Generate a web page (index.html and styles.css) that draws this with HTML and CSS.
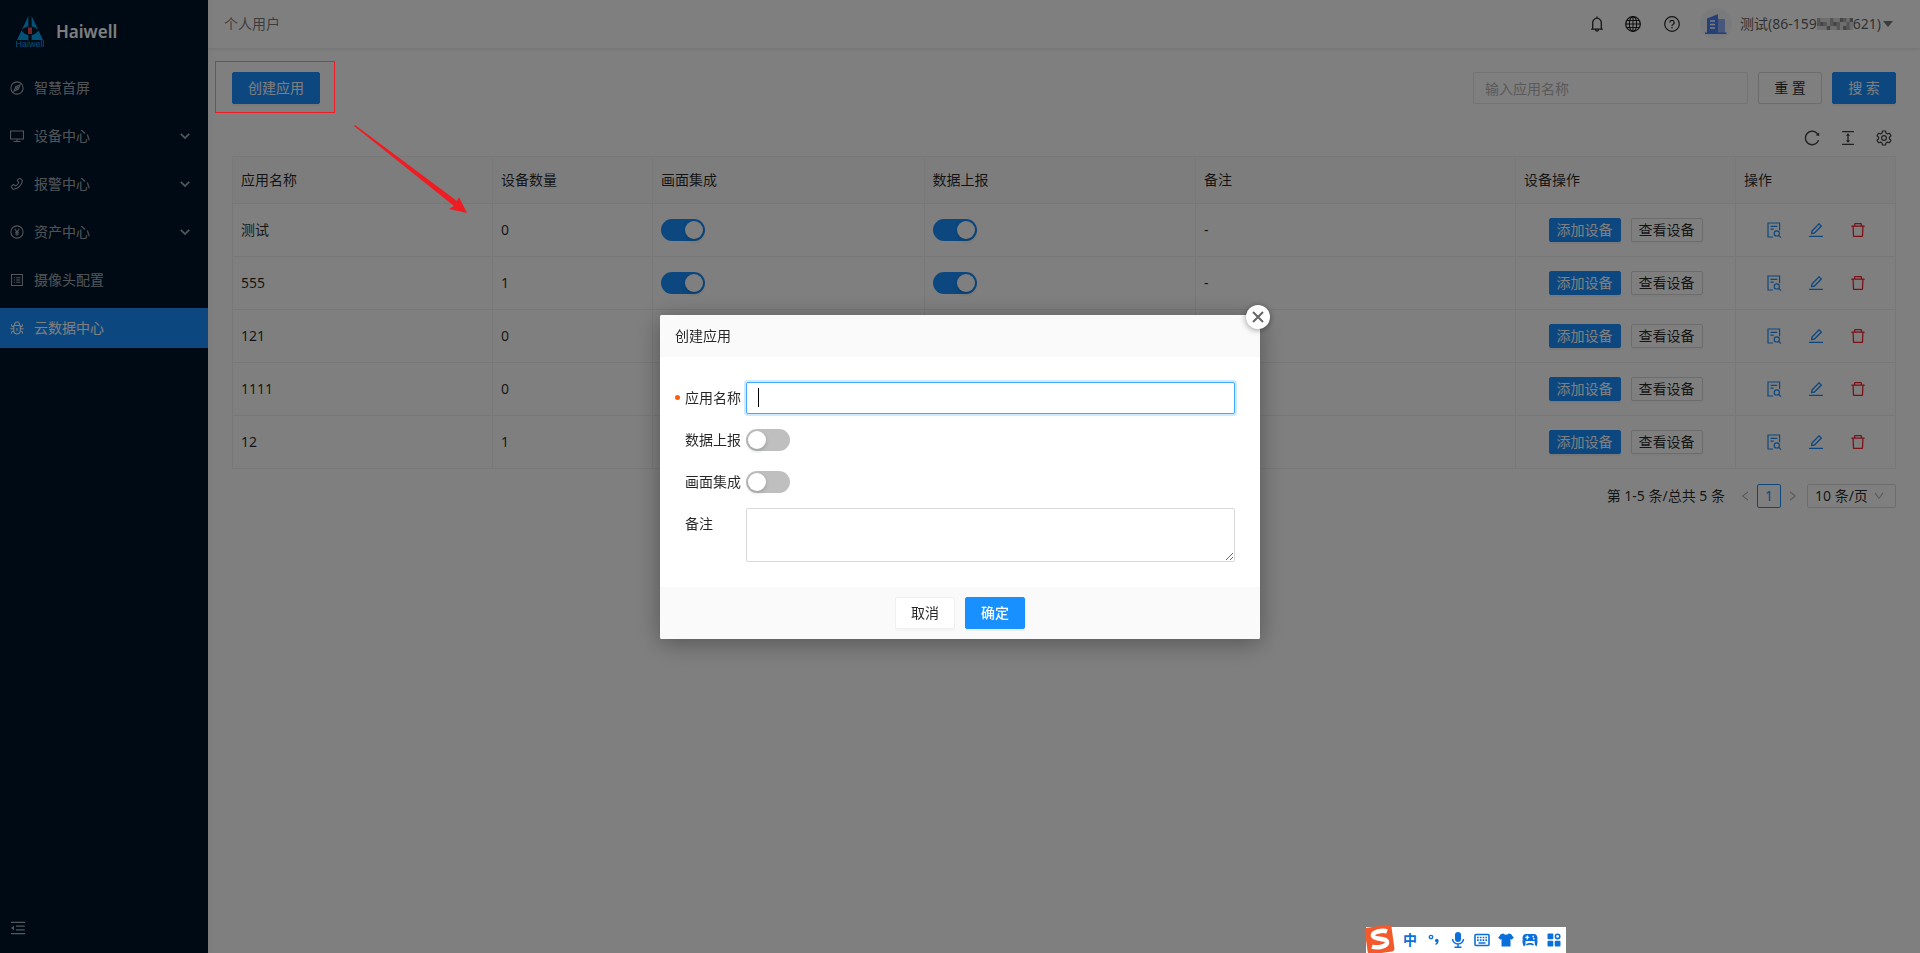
FILE: index.html
```html
<!DOCTYPE html>
<html lang="zh-CN">
<head>
<meta charset="utf-8">
<title>Haiwell</title>
<link rel="stylesheet" href="styles.css">
</head>
<body>
<svg class="sprite" aria-hidden="true">
  <symbol id="compass" viewBox="0 0 16 16"><g fill="none" stroke="currentColor" stroke-width="1.2"><circle cx="8" cy="8" r="7"/><path d="M11.4 4.6L9.4 9.4 4.6 11.4 6.6 6.6z"/><path d="M6.8 9.2l2.4-2.4" stroke-width="1.6"/></g></symbol>
  <symbol id="desktop" viewBox="0 0 16 16"><path d="M.6 2.2h14.8v9.2H.6zM8 11.4V14M4 14.2h8" fill="none" stroke="currentColor" stroke-width="1.2"/></symbol>
  <symbol id="phone" viewBox="0 0 16 16"><path d="M10.6 1.6l-2.1 2.1a.6.6 0 0 0 0 .8l1.6 1.9c-.8 1.8-2 3-3.8 3.8L4.500 8.600a.6.6 0 0 0-.8 0l-2.100 2.100a.6.6 0 0 0-.1.800l1.700 2.100c.3.400.7.500 1.200.400 5.100-1 8.800-4.700 9.700-9.500.1-.5-.1-.9-.400-1.200l-2.300-1.800a.6.6 0 0 0-.8.100z" fill="none" stroke="currentColor" stroke-width="1.200"/></symbol>
  <symbol id="pay" viewBox="0 0 16 16"><g fill="none" stroke="currentColor" stroke-width="1.2"><circle cx="8" cy="8" r="7"/><path d="M5.500 4.200L8 8l2.500-3.800M8 8v4.200M5.800 8.300h4.400M5.800 10.200h4.400"/></g></symbol>
  <symbol id="profile" viewBox="0 0 16 16"><path d="M1.800 1.800h12.400v12.400H1.800zM4.400 5.400h1.200M4.400 8h1.200M4.400 10.600h1.200M7 5.400h4.800M7 8h4.800M7 10.600h4.800" fill="none" stroke="currentColor" stroke-width="1.200"/></symbol>
  <symbol id="bug" viewBox="0 0 16 16"><path d="M4.300 5.200h7.400v5.600a3.700 3.900 0 0 1-7.400 0zM5.200 5.200V4a2.800 2.800 0 0 1 5.600 0v1.200M8 8v3.500M.4 8.800h3.900M11.700 8.800h3.900M1.800 3.600V5c0 .8.600 1.400 1.400 1.400h1.100M14.200 3.600V5c0 .8-.6 1.400-1.400 1.400h-1.100M1.800 14.600v-1.400c0-.8.600-1.400 1.400-1.400h1.300M14.200 14.600v-1.400c0-.8-.6-1.400-1.400-1.400h-1.300" fill="none" stroke="currentColor" stroke-width="1.200"/></symbol>
  <symbol id="chevron" viewBox="0 0 10 10"><path d="M.8 2.800L5 7l4.200-4.200" fill="none" stroke="currentColor" stroke-width="1.700"/></symbol>
  <symbol id="down" viewBox="0 0 1024 1024"><path d="M884 256h-75c-5.100 0-9.900 2.500-12.900 6.600L512 654.200 227.900 262.600c-3-4.100-7.800-6.600-12.900-6.600h-75c-6.500 0-10.300 7.400-6.500 12.700l352.600 486.100c12.800 17.600 39 17.600 51.700 0l352.600-486.100c3.900-5.300.1-12.700-6.400-12.700z"/></symbol>
  <symbol id="fold" viewBox="0 0 1024 1024"><path d="M408 442h480c4.400 0 8-3.600 8-8v-56c0-4.400-3.600-8-8-8H408c-4.400 0-8 3.600-8 8v56c0 4.400 3.600 8 8 8zm-8 204c0 4.400 3.600 8 8 8h480c4.400 0 8-3.600 8-8v-56c0-4.400-3.600-8-8-8H408c-4.400 0-8 3.600-8 8v56zm504-486H120c-4.400 0-8 3.600-8 8v56c0 4.400 3.600 8 8 8h784c4.400 0 8-3.600 8-8v-56c0-4.400-3.600-8-8-8zm0 632H120c-4.400 0-8 3.600-8 8v56c0 4.400 3.600 8 8 8h784c4.400 0 8-3.600 8-8v-56c0-4.400-3.600-8-8-8zM115.400 518.900L271.700 642c5.800 4.600 14.400.5 14.400-6.900V388.900c0-7.400-8.500-11.500-14.400-6.900L115.400 505.100a8.740 8.740 0 000 13.800z"/></symbol>
  <symbol id="bell" viewBox="0 0 1024 1024"><path d="M816 768h-24V428c0-141.100-104.300-257.800-240-277.200V112c0-22.100-17.900-40-40-40s-40 17.900-40 40v38.800C336.300 170.200 232 286.900 232 428v340h-24c-17.700 0-32 14.300-32 32v32c0 4.400 3.600 8 8 8h216c0 61.800 50.200 112 112 112s112-50.200 112-112h216c4.400 0 8-3.600 8-8v-32c0-17.700-14.300-32-32-32zM512 888c-26.500 0-48-21.500-48-48h96c0 26.500-21.500 48-48 48zM304 768V428c0-55.600 21.600-107.800 60.900-147.100S456.400 220 512 220c55.600 0 107.800 21.600 147.100 60.900S720 372.400 720 428v340H304z"/></symbol>
  <symbol id="globe" viewBox="0 0 16 16"><g fill="none" stroke="currentColor" stroke-width="1.1"><circle cx="8" cy="8" r="7.300" stroke-width="1.300"/><ellipse cx="8" cy="8" rx="3.700" ry="7.300"/><path d="M8 .7v14.600M.7 8h14.600M1.800 4.500h12.400M1.800 11.500h12.400"/></g></symbol>
  <symbol id="help" viewBox="0 0 16 16"><g fill="none" stroke="currentColor" stroke-width="1.200"><circle cx="8" cy="8" r="7.300"/><path d="M5.800 6.500a2.200 2.200 0 1 1 3.200 2c-.7.300-1 .7-1 1.300v.3"/></g><circle cx="8" cy="11.700" r=".8"/></symbol>
  <symbol id="reload" viewBox="0 0 1024 1024"><path d="M909.100 209.300l-56.400 44.100C775.800 155.100 656.200 92 521.900 92 290 92 102.300 279.500 102 511.500 101.700 743.700 289.800 932 521.900 932c181.300 0 335.800-115 394.600-276.100 1.500-4.200-.7-8.900-4.900-10.300l-56.700-19.500a8 8 0 00-10.100 4.800c-1.800 5-3.800 10-5.900 14.900-17.300 41-42.100 77.800-73.700 109.400A344.770 344.770 0 01655.900 829c-42.300 17.900-87.400 27-133.800 27-46.500 0-91.500-9.100-133.800-27A341.500 341.500 0 01279 755.200a342.160 342.160 0 01-73.700-109.400c-17.900-42.400-27-87.400-27-133.900s9.100-91.500 27-133.900c17.300-41 42.100-77.800 73.700-109.400 31.600-31.600 68.400-56.400 109.300-73.800 42.300-17.900 87.400-27 133.800-27 46.500 0 91.500 9.100 133.800 27a341.500 341.500 0 01109.300 73.800c9.900 9.900 19.200 20.400 27.800 31.400l-60.200 47a8 8 0 003 14.100l175.600 43c5 1.200 9.900-2.600 9.900-7.700l.8-180.900c-.1-6.600-7.800-10.300-13-6.200z"/></symbol>
  <symbol id="density" viewBox="0 0 1024 1024"><path d="M840 836H184c-4.400 0-8 3.600-8 8v60c0 4.400 3.600 8 8 8h656c4.400 0 8-3.600 8-8v-60c0-4.400-3.600-8-8-8zm0-724H184c-4.400 0-8 3.600-8 8v60c0 4.400 3.600 8 8 8h656c4.400 0 8-3.600 8-8v-60c0-4.400-3.600-8-8-8zM610.800 378c6 0 9.400-7 5.700-11.700L515.700 238.700a7.140 7.140 0 00-11.300 0L403.600 366.300a7.230 7.230 0 005.700 11.700H476v268h-62.800c-6 0-9.400 7-5.700 11.700l100.800 127.500c2.900 3.700 8.500 3.700 11.300 0l100.800-127.500c3.700-4.700.4-11.700-5.700-11.700H548V378h62.800z"/></symbol>
  <symbol id="gear" viewBox="0 0 16 16"><g fill="none" stroke="currentColor" stroke-width="1.200" stroke-linejoin="round"><path d="M6.500 1h3l.5 2 1.500.9 2-.7 1.500 2.600L13.400 7.200v1.600l1.600 1.400-1.500 2.600-2-.7-1.500.9-.5 2h-3L6 13l-1.500-.9-2 .7L1 10.200l1.600-1.400V7.200L1 5.800l1.500-2.600 2 .7L6 3z"/><circle cx="8" cy="8" r="2.400"/></g></symbol>
  <symbol id="search-doc" viewBox="0 0 16 16"><g fill="none" stroke="currentColor" stroke-width="1.200"><path d="M7 15H2V1h11.600v7.200M4.500 4.400h6.800M4.500 7.200h3.200"/><circle cx="10.800" cy="11.400" r="2.600"/><path d="M12.700 13.300l2.300 2.300"/></g></symbol>
  <symbol id="edit" viewBox="0 0 1024 1024"><path d="M257.700 752c2 0 4-.2 6-.5L431.900 722c2-.4 3.900-1.300 5.300-2.800l423.900-423.900a9.960 9.960 0 000-14.100L694.900 114.900c-1.900-1.900-4.400-2.900-7.100-2.900s-5.200 1-7.100 2.900L256.800 538.800c-1.500 1.500-2.400 3.300-2.800 5.300l-29.500 168.200a33.500 33.500 0 009.400 29.800c6.600 6.400 14.900 9.900 23.800 9.900zm67.400-174.400L687.800 215l73.300 73.300-362.700 362.600-88.900 15.700 15.600-89zM880 836H144c-17.700 0-32 14.300-32 32v36c0 4.400 3.600 8 8 8h784c4.400 0 8-3.600 8-8v-36c0-17.700-14.300-32-32-32z"/></symbol>
  <symbol id="trash" viewBox="0 0 1024 1024"><path d="M360 184h-8c4.400 0 8-3.600 8-8v8h304v-8c0 4.400 3.600 8 8 8h-8v72h72v-80c0-35.300-28.700-64-64-64H352c-35.300 0-64 28.700-64 64v80h72v-72zm504 72H160c-17.700 0-32 14.300-32 32v32c0 4.400 3.600 8 8 8h60.400l24.700 523c1.600 34.100 29.800 61 63.900 61h454c34.200 0 62.300-26.800 63.900-61l24.700-523H888c4.400 0 8-3.600 8-8v-32c0-17.700-14.300-32-32-32zM731.300 840H292.700l-24.200-512h487l-24.200 512z"/></symbol>
</svg>

<div class="app">
  <aside class="sidebar">
    <a class="brand" href="#">
      <svg class="brand-logo" viewBox="0 0 28 32" aria-hidden="true">
        <path d="M12.400 0V10.500C9 11 7 12.500 5.500 14.500 7 16.800 9.500 18.500 12.400 19V24H1zM15.600 0V10.500C19 11 21 12.500 22.500 14.500 21 16.800 18.500 18.500 15.600 19V24H27z" fill="#0aa5f0"/>
        <path d="M12 11.500h4v6.500h-4z" fill="#e8484f"/>
        <text x="14" y="31" text-anchor="middle" class="logo-text">Haiwell</text>
      </svg>
      <span class="brand-name">Haiwell</span>
    </a>
    <nav class="menu">
      <a class="menu-item" href="#"><svg class="i14"><use href="#compass"/></svg><span>智慧首屏</span></a>
      <a class="menu-item" href="#"><svg class="i14"><use href="#desktop"/></svg><span>设备中心</span><svg class="i10 arrow"><use href="#chevron"/></svg></a>
      <a class="menu-item" href="#"><svg class="i14"><use href="#phone"/></svg><span>报警中心</span><svg class="i10 arrow"><use href="#chevron"/></svg></a>
      <a class="menu-item" href="#"><svg class="i14"><use href="#pay"/></svg><span>资产中心</span><svg class="i10 arrow"><use href="#chevron"/></svg></a>
      <a class="menu-item" href="#"><svg class="i14"><use href="#profile"/></svg><span>摄像头配置</span></a>
      <a class="menu-item active" href="#"><svg class="i14"><use href="#bug"/></svg><span>云数据中心</span></a>
    </nav>
    <button class="icon-btn collapse" aria-label="收起菜单"><svg class="i18"><use href="#fold"/></svg></button>
  </aside>

  <div class="main">
    <header class="header">
      <span class="muted">个人用户</span>
      <div class="header-right">
        <button class="icon-btn" aria-label="通知"><svg class="i18"><use href="#bell"/></svg></button>
        <button class="icon-btn globe" aria-label="语言"><svg class="i16"><use href="#globe"/></svg></button>
        <button class="icon-btn help" aria-label="帮助"><svg class="i16"><use href="#help"/></svg></button>
        <button class="user">
          <svg class="avatar" viewBox="0 0 32 32" aria-hidden="true"><circle cx="16" cy="16" r="16" fill="#f3f5f8"/><path d="M18 11h6.500q.5 0 .5.500V25h-7z" fill="#8fb0f5"/><path d="M7 10.500l10-4q1-.5 1 .5v18H7z" fill="#4a7ff2"/><path d="M5 24.500h21.500V26H5z" fill="#4a7ff2"/><path d="M10 13h5M10 16.500h5M10 20h5" stroke="#fff" stroke-width="1.300"/></svg>
          <span class="user-name"><span>测试(86-159</span><svg class="mosaic" viewBox="0 0 11 3" preserveAspectRatio="none" aria-hidden="true"><path fill="#ddd" d="M0 0h11v3H0z"/><path fill="#aaa" d="M0 0h1v2H0zM2 1h1v1H2zM4 0h1v2H4zM6 1h1v2H6zM8 0h1v1H8zM9 1h1v2H9z"/><path fill="#888" d="M1 1h1v1H1zM3 2h1v1H3zM5 1h1v1H5zM7 0h1v1H7zM8 2h1v1H8zM10 0h1v1h-1z"/></svg><span>621)</span></span>
          <i class="caret-down"></i>
        </button>
      </div>
    </header>

    <main class="content">
      <div class="filters">
        <span class="create-wrap"><button class="btn primary">创建应用</button></span>
        <form class="search">
          <input class="text-input query" type="text" placeholder="输入应用名称" aria-label="应用名称">
          <button class="btn" type="button">重 置</button>
          <button class="btn primary" type="button">搜 索</button>
        </form>
      </div>
      <div class="tools">
        <button class="icon-btn" aria-label="刷新"><svg class="i18"><use href="#reload"/></svg></button>
        <button class="icon-btn" aria-label="密度"><svg class="i18"><use href="#density"/></svg></button>
        <button class="icon-btn" aria-label="列设置"><svg class="i18 pad"><use href="#gear"/></svg></button>
      </div>
      <table class="table">
        <colgroup><col class="c-name"><col class="c-count"><col><col><col class="c-note"><col class="c-device"><col class="c-ops"></colgroup>
        <thead><tr><th>应用名称</th><th>设备数量</th><th>画面集成</th><th>数据上报</th><th>备注</th><th>设备操作</th><th>操作</th></tr></thead>
        <tbody>
          <tr><td>测试</td><td>0</td><td><input class="switch" type="checkbox" checked aria-label="画面集成"></td><td><input class="switch" type="checkbox" checked aria-label="数据上报"></td><td>-</td>
            <td><div class="cell"><button class="btn small primary">添加设备</button><button class="btn small">查看设备</button></div></td>
            <td><div class="cell ops"><button class="icon-btn" aria-label="查看"><svg class="i18 pad"><use href="#search-doc"/></svg></button><button class="icon-btn" aria-label="编辑"><svg class="i18"><use href="#edit"/></svg></button><button class="icon-btn danger" aria-label="删除"><svg class="i18"><use href="#trash"/></svg></button></div></td></tr>
          <tr><td>555</td><td>1</td><td><input class="switch" type="checkbox" checked aria-label="画面集成"></td><td><input class="switch" type="checkbox" checked aria-label="数据上报"></td><td>-</td>
            <td><div class="cell"><button class="btn small primary">添加设备</button><button class="btn small">查看设备</button></div></td>
            <td><div class="cell ops"><button class="icon-btn" aria-label="查看"><svg class="i18 pad"><use href="#search-doc"/></svg></button><button class="icon-btn" aria-label="编辑"><svg class="i18"><use href="#edit"/></svg></button><button class="icon-btn danger" aria-label="删除"><svg class="i18"><use href="#trash"/></svg></button></div></td></tr>
          <tr><td>121</td><td>0</td><td></td><td></td><td></td>
            <td><div class="cell"><button class="btn small primary">添加设备</button><button class="btn small">查看设备</button></div></td>
            <td><div class="cell ops"><button class="icon-btn" aria-label="查看"><svg class="i18 pad"><use href="#search-doc"/></svg></button><button class="icon-btn" aria-label="编辑"><svg class="i18"><use href="#edit"/></svg></button><button class="icon-btn danger" aria-label="删除"><svg class="i18"><use href="#trash"/></svg></button></div></td></tr>
          <tr><td>1111</td><td>0</td><td></td><td></td><td></td>
            <td><div class="cell"><button class="btn small primary">添加设备</button><button class="btn small">查看设备</button></div></td>
            <td><div class="cell ops"><button class="icon-btn" aria-label="查看"><svg class="i18 pad"><use href="#search-doc"/></svg></button><button class="icon-btn" aria-label="编辑"><svg class="i18"><use href="#edit"/></svg></button><button class="icon-btn danger" aria-label="删除"><svg class="i18"><use href="#trash"/></svg></button></div></td></tr>
          <tr><td>12</td><td>1</td><td></td><td></td><td></td>
            <td><div class="cell"><button class="btn small primary">添加设备</button><button class="btn small">查看设备</button></div></td>
            <td><div class="cell ops"><button class="icon-btn" aria-label="查看"><svg class="i18 pad"><use href="#search-doc"/></svg></button><button class="icon-btn" aria-label="编辑"><svg class="i18"><use href="#edit"/></svg></button><button class="icon-btn danger" aria-label="删除"><svg class="i18"><use href="#trash"/></svg></button></div></td></tr>
        </tbody>
      </table>
      <div class="pager">
        <span class="total">第 1-5 条/总共 5 条</span>
        <button class="icon-btn page-nav" aria-label="上一页"><svg class="i12 left"><use href="#down"/></svg></button>
        <button class="page current">1</button>
        <button class="icon-btn page-nav" aria-label="下一页"><svg class="i12 right"><use href="#down"/></svg></button>
        <span class="select-wrap"><select class="page-size" aria-label="每页条数"><option>10 条/页</option></select><svg class="i12 select-arrow"><use href="#down"/></svg></span>
      </div>
    </main>
  </div>
</div>

<div class="overlay">
  <form class="modal" role="dialog" aria-labelledby="modal-title">
    <button class="close" type="button" aria-label="关闭"><svg viewBox="0 0 12 12"><path d="M1 1l10 10M11 1L1 11" stroke="currentColor" stroke-width="2"/></svg></button>
    <h2 class="modal-head" id="modal-title">创建应用</h2>
    <div class="modal-body">
      <div class="field required"><label for="name">应用名称</label><span class="focus-wrap"><input class="text-input focused" id="name" type="text"></span></div>
      <div class="field"><label for="report">数据上报</label><input class="switch" id="report" type="checkbox"></div>
      <div class="field"><label for="screen">画面集成</label><input class="switch" id="screen" type="checkbox"></div>
      <div class="field"><label for="note">备注</label><textarea class="text-input note" id="note"></textarea></div>
    </div>
    <div class="modal-foot">
      <button class="btn light" type="button">取消</button>
      <button class="btn primary strong" type="button">确定</button>
    </div>
  </form>
</div>

<div class="callout-box"></div>
<svg class="callout-arrow" viewBox="0 0 116 92" aria-hidden="true"><path d="M1 0L103 76 105 72 113 88 95 84 100 81 0 1z" fill="#ee1c23"/></svg>

<div class="ime">
  <svg class="ime-logo" viewBox="0 0 32 32" aria-hidden="true"><g transform="rotate(-8 16 16)"><rect x="2" y="3" width="27" height="27" rx="3" fill="#f4592b"/><path d="M24 9.500C20 7.500 9 7.500 9.500 12c.5 4 13 3.500 13 8 0 5-11 4.500-15.500 2.500" fill="none" stroke="#fff" stroke-width="4.500"/></g></svg>
  <span class="ime-text">中</span>
  <svg class="i16" viewBox="0 0 16 16"><circle cx="5" cy="5" r="1.700" fill="none" stroke="currentColor" stroke-width="1.300"/><path d="M9 8.500a1.800 1.800 0 0 1 3.600 0c0 2.200-.9 3.800-2.800 4.500l-.5-1.200c.8-.4 1.200-.9 1.300-1.500A1.700 1.700 0 0 1 9 8.500z"/></svg>
  <svg class="i16" viewBox="0 0 16 16"><rect x="5" y="0" width="6" height="10" rx="3"/><path d="M2.500 7a5.500 5 0 0 0 11 0M8 12v3.200M4.500 15.200h7" fill="none" stroke="currentColor" stroke-width="1.500"/></svg>
  <svg class="i16" viewBox="0 0 16 16"><rect x="1" y="2.500" width="14" height="11" rx="1" fill="none" stroke="currentColor" stroke-width="1.600"/><path d="M3 5.500h10M3 8.200h10" stroke="currentColor" stroke-width="1.700" stroke-dasharray="1.700 1.100"/><path d="M4.500 11h7" stroke="currentColor" stroke-width="1.500"/></svg>
  <svg class="i16" viewBox="0 0 16 16"><path d="M5.500 1.500c1 1.600 4 1.600 5 0L13 2l2.800 3.800-2.300 2-1-1V14.500h-9V6.800l-1 1-2.300-2L3 2z"/></svg>
  <svg class="i16" viewBox="0 0 16 16"><path fill-rule="evenodd" d="M4 2h8c2.200 0 3.500 2 3.500 4.500 0 1.500-1 2.500-2.500 2.500H3C1.500 9 .5 8 .5 6.500.5 4 1.800 2 4 2zM4.600 3.500v1.300H3.300v1.300h1.300v1.300h1.300V6.100h1.300V4.800H5.900V3.500zM10.500 3.700v1.500H12V3.700zM11 6v1.500h1.500V6z"/><path d="M.5 8l3 .5L3.500 13l-1.500 1.500C.8 13 .3 10 .5 8zM15.500 8l-3 .5.5 4.500 1.500 1.500C15.200 13 15.700 10 15.500 8zM4 12.500C5 10.500 11 10.500 12 12.500l-1 1c-1-1-5-1-6 0z"/></svg>
  <svg class="i16" viewBox="0 0 16 16"><rect x="1.500" y="1.500" width="5.800" height="5.800" rx="1"/><rect x="1.500" y="8.700" width="5.800" height="5.800" rx="1"/><rect x="8.700" y="8.700" width="5.800" height="5.800" rx="1"/><circle cx="11.600" cy="4.400" r="2.200" fill="none" stroke="currentColor" stroke-width="1.600"/></svg>
</div>
</body>
</html>
```

FILE: styles.css
```css
*, *::before, *::after { box-sizing: border-box; }

body {
  margin: 0;
  font: 14px/22px "Noto Sans", "Noto Sans CJK SC", sans-serif;
  color: rgba(0, 0, 0, .85);
  background: #fff;
}

button, input, select, textarea { font: inherit; color: inherit; }
button { cursor: pointer; }
svg { fill: currentColor; flex: none; }
a { text-decoration: none; color: inherit; }
.sprite { display: none; }
.i10 { width: 10px; height: 10px; }
.i12 { width: 12px; height: 12px; }
.i14 { width: 14px; height: 14px; }
.i16 { width: 16px; height: 16px; }
.i18 { width: 18px; height: 18px; }
.pad { padding: 1px; }

.icon-btn { display: inline-flex; padding: 0; border: 0; background: none; }

.app { display: flex; min-height: 100vh; }

/* Sidebar */
.sidebar {
  display: flex;
  flex-direction: column;
  flex: none;
  width: 208px;
  color: rgba(255, 255, 255, .65);
  background: #001529;
  box-shadow: 2px 0 8px rgba(29, 35, 41, .05);
}
.brand { display: flex; align-items: center; gap: 12px; height: 64px; padding: 0 16px; }
.brand-logo { width: 28px; height: 32px; }
.logo-text { font: 9px "Liberation Sans", sans-serif; fill: #0aa5f0; }
.brand-name { font-size: 17px; font-weight: 600; color: #fff; }
.menu { display: flex; flex-direction: column; gap: 8px; padding-top: 4px; }
.menu-item { display: flex; align-items: center; gap: 10px; height: 40px; padding: 0 18px 0 10px; }
.menu-item.active { color: #fff; background: #1890ff; }
.arrow { margin-left: auto; }
.collapse { margin-top: auto; padding: 16px 9px; }

/* Header */
.main { flex: 1; min-width: 0; }
.header {
  display: flex;
  align-items: center;
  justify-content: space-between;
  height: 48px;
  padding: 0 27px 0 16px;
  box-shadow: 0 1px 4px rgba(0, 21, 41, .12);
}
.muted { color: rgba(0, 0, 0, .55); }
.header-right { display: flex; align-items: center; }
.globe { margin-left: 19px; }
.help { margin-left: 23px; }
.user { display: flex; align-items: center; margin-left: 20px; padding: 0; border: 0; background: none; color: rgba(0, 0, 0, .65); }
.avatar { width: 32px; height: 32px; margin-right: 8px; }
.user-name { display: flex; align-items: center; }
.mosaic { width: 36px; height: 12px; }
.caret-down { margin-left: 2px; border: 5px solid transparent; border-top: 6px solid #777; border-bottom: 0; }

/* Filters and tools */
.content { padding: 24px; }
.filters, .search, .tools, .pager { display: flex; align-items: center; }
.filters { justify-content: space-between; }
.search { gap: 10px; }
.btn {
  height: 32px;
  padding: 0 15px;
  border: 1px solid #d9d9d9;
  border-radius: 2px;
  background: #fff;
  box-shadow: 0 2px 0 rgba(0, 0, 0, .02);
  white-space: nowrap;
}
.search .btn { width: 64px; }
.btn.primary { color: #fff; border-color: #1890ff; background: #1890ff; box-shadow: 0 2px 0 rgba(0, 0, 0, .05); }
.btn.small { height: 24px; padding: 0 7px; line-height: 20px; }
.btn.light { border-color: #f0f0f0; }
.btn.strong { font-weight: 500; }
.text-input {
  width: 100%;
  height: 32px;
  padding: 4px 11px;
  border: 1px solid #d9d9d9;
  border-radius: 2px;
  outline: 0;
  background: #fff;
}
.text-input::placeholder { color: #b4b4b4; }
.query { width: 275px; border-color: #e8e8e8; }
.tools { justify-content: flex-end; gap: 18px; height: 52px; padding: 16px 3px 0 0; color: rgba(0, 0, 0, .75); }

/* Table */
.table { width: 100%; table-layout: fixed; border-collapse: collapse; }
.table th, .table td { height: 53px; padding: 0 8px; border: 1px solid #f0f0f0; text-align: left; font-weight: 400; }
.table th { height: 47px; background: #fafafa; }
.c-name { width: 260px; }
.c-count, .c-ops { width: 160px; }
.c-note { width: 320px; }
.c-device { width: 220px; }
.cell { display: flex; align-items: center; justify-content: center; gap: 10px; }
.ops { gap: 24px; color: #1890ff; }
.danger { color: #f5222d; }

.switch {
  display: block;
  appearance: none;
  position: relative;
  flex: none;
  width: 44px;
  height: 22px;
  margin: 0;
  border-radius: 11px;
  background: #bfbfbf;
}
.switch::before {
  content: "";
  position: absolute;
  top: 2px;
  left: 2px;
  width: 18px;
  height: 18px;
  border-radius: 9px;
  background: #fff;
  box-shadow: 0 2px 4px rgba(0, 35, 11, .2);
}
.switch:checked { background: #1890ff; }
.switch:checked::before { left: 24px; }

/* Pagination */
.pager { justify-content: flex-end; padding-top: 15px; }
.total { margin-right: 14px; }
.page-nav { width: 12px; color: #a6a6a6; }
.left { transform: rotate(90deg); }
.right { transform: rotate(-90deg); }
.page { width: 24px; height: 24px; margin: 0 6px; padding: 0; border: 1px solid #1890ff; border-radius: 2px; line-height: 22px; color: #1890ff; background: #fff; }
.select-wrap { position: relative; margin-left: 8px; }
.page-size { display: block; appearance: none; width: 89px; height: 24px; padding: 0 7px; border: 1px solid #d9d9d9; border-radius: 2px; line-height: 22px; background: #fff; }
.select-arrow { position: absolute; top: 6px; right: 11px; color: #a6a6a6; }

/* Dialog */
.overlay {
  position: fixed;
  inset: 0;
  display: flex;
  align-items: center;
  justify-content: center;
  background: rgba(0, 0, 0, .5);
}
.modal {
  position: relative;
  width: 600px;
  border-radius: 2px;
  background: #fff;
  box-shadow: 0 4px 24px rgba(0, 0, 0, .35);
}
.modal-head { margin: 0; padding: 10px 15px; font-size: 14px; line-height: 22px; font-weight: 400; background: #fafafa; border-radius: 2px 2px 0 0; }
.modal-body { display: grid; gap: 10px; padding: 25px; }
.modal-foot { display: flex; justify-content: center; gap: 10px; padding: 10px; background: #fafafa; border-radius: 0 0 2px 2px; }
.modal-foot .btn { width: 60px; }
.close {
  position: absolute;
  top: -10px;
  right: -10px;
  display: flex;
  align-items: center;
  justify-content: center;
  width: 24px;
  height: 24px;
  padding: 0;
  border: 0;
  border-radius: 12px;
  color: #666;
  background: #fff;
  box-shadow: 0 1px 6px rgba(0, 0, 0, .4);
}
.close svg { width: 12px; height: 12px; }
.field { position: relative; display: flex; align-items: center; min-height: 32px; }
.field label { flex: none; align-self: flex-start; width: 61px; line-height: 32px; }
.required::before { content: ""; position: absolute; top: 13px; left: -10px; width: 5px; height: 5px; border-radius: 3px; background: #ff5c0a; }
.focus-wrap { position: relative; flex: 1; }
.focus-wrap::after { content: ""; position: absolute; top: 6px; left: 12px; width: 1px; height: 19px; background: #000; }
.focused { display: block; border-color: #40a9ff; box-shadow: 0 0 0 2px rgba(24, 144, 255, .2); }
.note { height: 54px; resize: vertical; }

/* Annotations above the page */
.callout-box { position: fixed; top: 61px; left: 215px; width: 120px; height: 52px; border: 1px solid #ee1c23; }
.callout-arrow { position: fixed; top: 125px; left: 354px; width: 116px; height: 92px; }

/* Input method bar */
.ime {
  position: fixed;
  left: 1366px;
  bottom: 0;
  display: flex;
  align-items: center;
  gap: 8px;
  height: 26px;
  padding: 0 4px 0 36px;
  color: #0b6fdb;
  background: #fff;
}
.ime-logo { position: absolute; left: -2px; bottom: -2px; width: 32px; height: 32px; }
.ime-text { width: 16px; font-weight: 700; text-align: center; }
```
